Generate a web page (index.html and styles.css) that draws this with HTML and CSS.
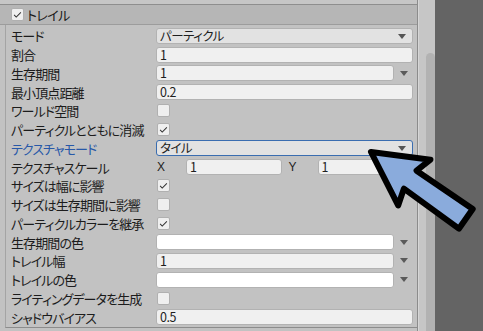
FILE: index.html
```html
<!DOCTYPE html>
<html lang="ja">
    <head>
        <meta charset="UTF-8">
        <title>トレイル</title>
        <link rel="stylesheet" href="styles.css">
    </head>
    <body>

        <div class="inspector">

            <div class="panel">
                <div class="panel_top"></div>

                <div class="module_head">
                    <span class="check check_head"><svg viewBox="0 0 13 13"><polyline points="2.5,7 5,9.5 10.5,4"/></svg></span>
                    <span class="head_title">トレイル</span>
                </div>

                <div class="module_body">
                    <div class="row">
                        <span class="label">モード</span>
                        <div class="control"><div class="dropdown">パーティクル</div></div>
                    </div>
                    <div class="row">
                        <span class="label">割合</span>
                        <div class="control"><div class="field">1</div></div>
                    </div>
                    <div class="row">
                        <span class="label">生存期間</span>
                        <div class="control"><div class="field">1</div><span class="side_arrow"></span></div>
                    </div>
                    <div class="row">
                        <span class="label">最小頂点距離</span>
                        <div class="control"><div class="field">0.2</div></div>
                    </div>
                    <div class="row">
                        <span class="label">ワールド空間</span>
                        <div class="control"><span class="check"></span></div>
                    </div>
                    <div class="row">
                        <span class="label">パーティクルとともに消滅</span>
                        <div class="control"><span class="check"><svg viewBox="0 0 13 13"><polyline points="2.5,7 5,9.5 10.5,4"/></svg></span></div>
                    </div>
                    <div class="row">
                        <span class="label label_focus">テクスチャモード</span>
                        <div class="control"><div class="dropdown dropdown_focus">タイル</div></div>
                    </div>
                    <div class="row">
                        <span class="label">テクスチャスケール</span>
                        <div class="control">
                            <div class="half"><span class="axis">X</span><div class="field">1</div></div>
                            <div class="half"><span class="axis">Y</span><div class="field">1</div></div>
                        </div>
                    </div>
                    <div class="row">
                        <span class="label">サイズは幅に影響</span>
                        <div class="control"><span class="check"><svg viewBox="0 0 13 13"><polyline points="2.5,7 5,9.5 10.5,4"/></svg></span></div>
                    </div>
                    <div class="row">
                        <span class="label">サイズは生存期間に影響</span>
                        <div class="control"><span class="check"></span></div>
                    </div>
                    <div class="row">
                        <span class="label">パーティクルカラーを継承</span>
                        <div class="control"><span class="check"><svg viewBox="0 0 13 13"><polyline points="2.5,7 5,9.5 10.5,4"/></svg></span></div>
                    </div>
                    <div class="row">
                        <span class="label">生存期間の色</span>
                        <div class="control"><div class="field color_field"></div><span class="side_arrow"></span></div>
                    </div>
                    <div class="row">
                        <span class="label">トレイル幅</span>
                        <div class="control"><div class="field">1</div><span class="side_arrow"></span></div>
                    </div>
                    <div class="row">
                        <span class="label">トレイルの色</span>
                        <div class="control"><div class="field color_field"></div><span class="side_arrow"></span></div>
                    </div>
                    <div class="row">
                        <span class="label">ライティングデータを生成</span>
                        <div class="control"><span class="check"></span></div>
                    </div>
                    <div class="row">
                        <span class="label">シャドウバイアス</span>
                        <div class="control"><div class="field">0.5</div></div>
                    </div>
                </div>
            </div>

            <div class="scrollbar">
                <div class="scroll_thumb"></div>
            </div>

            <div class="backdrop"></div>

        </div>

        <!-- 説明用の矢印 -->
        <svg class="pointer" width="483" height="331" viewBox="0 0 483 331">
            <g transform="translate(371 152) rotate(35.2)">
                <polygon points="0,0 53,-28 48,-11 116,-12 116,12 48,11 53,28"/>
            </g>
        </svg>

    </body>
</html>
```

FILE: styles.css
```css
* {
    margin: 0px;
    padding: 0px;
    box-sizing: border-box;
}

body {
    width: 483px;
    height: 331px;
    overflow: hidden;
    background-color: #646464;
    font-family: "Noto Sans CJK JP", "Noto Sans", sans-serif;
    font-feature-settings: "palt";
    font-size: 13px;
    color: #1c1c1c;
}

.inspector {
    display: flex;
    height: 331px;
}

.panel {
    width: 418px;
    background-color: #c2c2c2;
    border-right: 1px solid #8c8c8c;
}

.panel_top {
    height: 4px;
    background-color: #c6c6c6;
}

.module_head {
    display: flex;
    align-items: center;
    gap: 3px;
    height: 21px;
    padding-left: 11px;
    background-color: #b6b6b6;
    border-top: 1px solid #8e8e8e;
    border-bottom: 1px solid #9c9c9c;
}

.head_title {
    font-size: 13px;
    letter-spacing: -0.6px;
    color: #181818;
    line-height: 1;
}

.module_body {
    margin-left: 5px;
    padding-top: 1.5px;
    border-left: 1px solid #a4a4a4;
    border-bottom: 1px solid #8c8c8c;
}

.row {
    display: flex;
    align-items: center;
    height: 18.75px;
    padding-left: 5px;
    padding-right: 4px;
}

.label {
    width: 145px;
    flex-shrink: 0;
    white-space: nowrap;
    letter-spacing: -0.9px;
    line-height: 1;
}

.label_focus {
    color: #2758a8;
}

.control {
    flex: 1;
    display: flex;
    align-items: center;
    min-width: 0;
}

.field, .dropdown {
    flex: 1;
    height: 16px;
    padding-left: 3px;
    border: 1px solid #b2b2b2;
    border-radius: 3px;
    background-color: #f0f0f0;
    font-size: 12.5px;
    letter-spacing: -0.5px;
    line-height: 14px;
    color: #1e1e1e;
}

.color_field {
    background-color: #ffffff;
}

.dropdown {
    position: relative;
    background-color: #e2e2e2;
}

.dropdown::after {
    content: "";
    position: absolute;
    right: 6px;
    top: 5px;
    border-left: 4px solid transparent;
    border-right: 4px solid transparent;
    border-top: 5px solid #555555;
}

.dropdown_focus {
    border-color: #3a6db0;
}

.side_arrow {
    width: 19px;
    flex-shrink: 0;
    display: flex;
    justify-content: center;
}

.side_arrow::after {
    content: "";
    border-left: 4px solid transparent;
    border-right: 4px solid transparent;
    border-top: 5px solid #5a5a5a;
}

.half {
    flex: 1;
    display: flex;
    align-items: center;
}

.half:first-child {
    margin-right: 6px;
}

.axis {
    width: 30px;
    flex-shrink: 0;
    padding-left: 1px;
    font-family: "Liberation Sans", sans-serif;
    font-size: 12px;
    color: #222222;
}

.check {
    display: block;
    width: 13px;
    height: 13px;
    margin-left: 1px;
    border: 1px solid #b0b0b0;
    border-radius: 2px;
    background-color: #efefef;
}

.check svg {
    display: block;
    width: 11px;
    height: 11px;
    fill: none;
    stroke: #303030;
    stroke-width: 1.2;
}

.check_head {
    width: 13px;
    height: 13px;
    margin-left: 0px;
}

.scrollbar {
    width: 17px;
    display: flex;
    flex-direction: column;
    padding-top: 53px;
    padding-left: 7px;
    background-color: #c6c6c6;
    border-left: 1px solid #d6d6d6;
}

.scroll_thumb {
    flex: 1;
    border-radius: 5px 5px 0 0;
    background-color: #b2b2b2;
}

.backdrop {
    flex: 1;
    background-color: #646464;
}

.pointer {
    position: absolute;
    left: 0;
    top: 0;
}

.pointer polygon {
    fill: #8aabdc;
    stroke: #000000;
    stroke-width: 6;
    stroke-linejoin: round;
}
```
